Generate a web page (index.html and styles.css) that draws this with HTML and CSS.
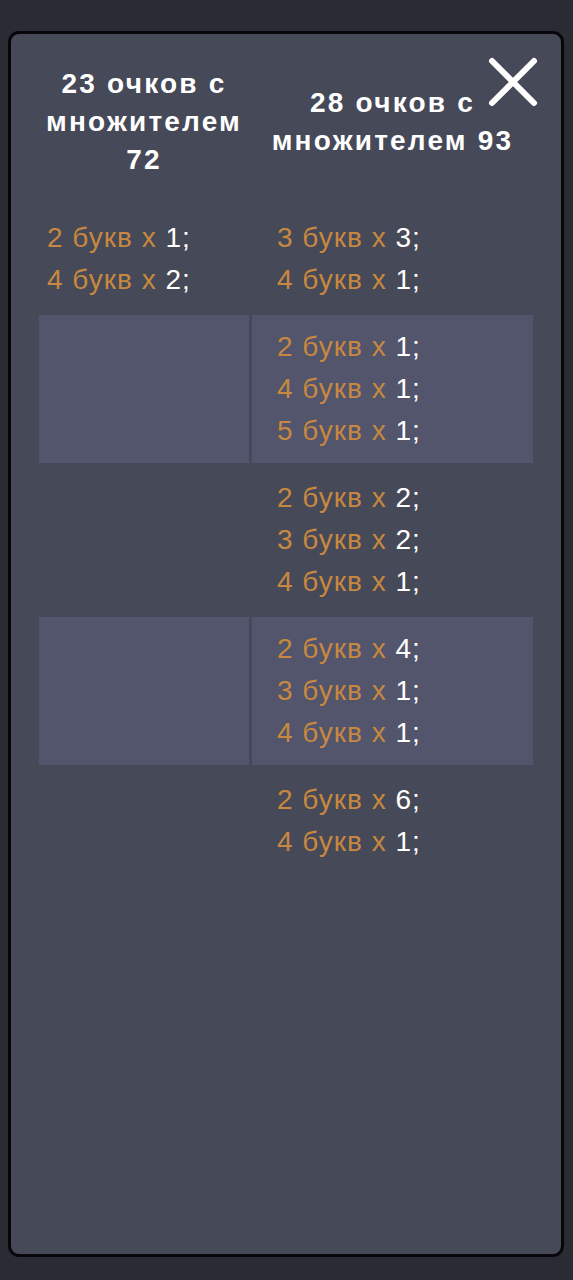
FILE: index.html
```html
<!DOCTYPE html>
<html lang="ru">
<head>
<meta charset="utf-8">
<title>Очки</title>
<link rel="stylesheet" href="styles.css">
</head>
<body>
<div class="modal">
  <button class="close" aria-label="Закрыть">
    <svg width="52" height="52" viewBox="0 0 52 52"><path d="M5 5 L47 47 M47 5 L5 47" stroke="#fff" stroke-width="6" stroke-linecap="round" fill="none"/></svg>
  </button>
  <div class="grid">
    <div class="head">23 очков с множителем 72</div>
    <div class="head">28 очков с множителем 93</div>

    <div class="cell left"><div><span class="o">2 букв х </span>1;</div><div><span class="o">4 букв х </span>2;</div></div>
    <div class="cell right"><div><span class="o">3 букв х </span>3;</div><div><span class="o">4 букв х </span>1;</div></div>

    <div class="cell left hl"></div>
    <div class="cell right hl"><div><span class="o">2 букв х </span>1;</div><div><span class="o">4 букв х </span>1;</div><div><span class="o">5 букв х </span>1;</div></div>

    <div class="cell left"></div>
    <div class="cell right"><div><span class="o">2 букв х </span>2;</div><div><span class="o">3 букв х </span>2;</div><div><span class="o">4 букв х </span>1;</div></div>

    <div class="cell left hl"></div>
    <div class="cell right hl"><div><span class="o">2 букв х </span>4;</div><div><span class="o">3 букв х </span>1;</div><div><span class="o">4 букв х </span>1;</div></div>

    <div class="cell left"></div>
    <div class="cell right"><div><span class="o">2 букв х </span>6;</div><div><span class="o">4 букв х </span>1;</div></div>
  </div>
</div>
</body>
</html>
```
FILE: styles.css
```css
html, body {
  margin: 0;
  padding: 0;
  background: #2a2c33;
}
body {
  height: 1280px;
  padding-top: 31px;
  box-sizing: border-box;
  font-family: "Liberation Sans", Arial, sans-serif;
}
.modal {
  position: relative;
  box-sizing: border-box;
  margin-left: 8px;
  width: 556px;
  height: 1226px;
  background: #464957;
  border: 3px solid #07070b;
  border-radius: 11px;
  padding: 31px 27px 0 28px;
}
.close {
  position: absolute;
  top: 22px;
  right: 22px;
  width: 52px;
  height: 52px;
  padding: 0;
  border: 0;
  background: none;
}
.close svg { display: block; }
.grid {
  display: grid;
  grid-template-columns: 210px 281px;
  column-gap: 3px;
  row-gap: 3px;
}
.head {
  display: flex;
  align-items: center;
  justify-content: center;
  text-align: center;
  color: #fff;
  font-weight: bold;
  font-size: 28px;
  letter-spacing: 2.2px;
  line-height: 38px;
  padding-bottom: 24px;
}
.cell {
  font-size: 28px;
  letter-spacing: 1px;
  line-height: 42px;
  color: #fff;
  padding: 11px 0;
}
.cell.left { padding-left: 8px; }
.cell.right { padding-left: 25px; }
.hl { background: #52556b; }
.o { color: #c8883f; }
```
